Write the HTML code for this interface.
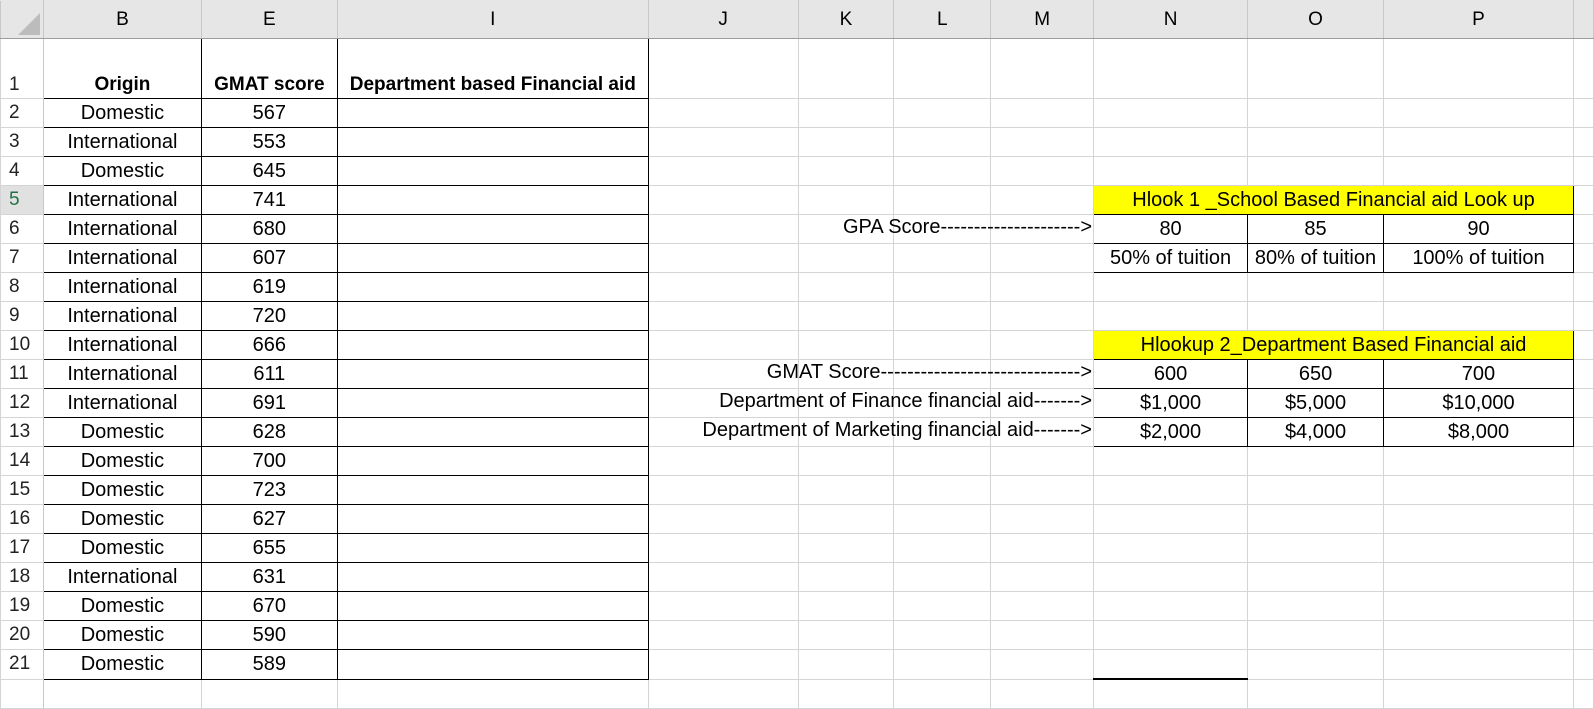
<!DOCTYPE html>
<html><head><meta charset="utf-8"><style>
body{margin:0;width:1594px;height:680px;overflow:hidden;background:#fff;font-family:"Liberation Sans",Arial,sans-serif;font-size:20px;color:#000;position:relative}
table{border-collapse:collapse;table-layout:fixed;position:absolute;left:0;top:0}
td{border:1px solid #d4d4d4;padding:0;text-align:center;white-space:nowrap;overflow:hidden;height:28px;line-height:28px}
tr.h td{background:#e6e6e6;height:37px;border-color:#e6e6e6 #c8c8c8 #9c9c9c #c8c8c8;font-size:19px;line-height:37px}
tr.r1 td{height:58px;line-height:24px;vertical-align:bottom;padding-bottom:1px}
td.rh{background:#fff;text-align:left;padding-left:8px;border-right:1px solid #c8c8c8;color:#222;font-size:19px}
td.b{border:1px solid #000}
td.bb{font-weight:bold;font-size:19px}
td.y{background:#ffff00;border:1px solid #000}
td.k{border:1px solid #000}
.lbl{position:absolute;right:calc(1594px - 1092px);white-space:nowrap;font-size:20px;line-height:28px}
</style></head><body>
<table>
<colgroup><col style="width:43px"><col style="width:158px"><col style="width:136px"><col style="width:311px"><col style="width:150px"><col style="width:96px"><col style="width:97px"><col style="width:103px"><col style="width:154px"><col style="width:136px"><col style="width:190px"><col style="width:20px"></colgroup>
<tr class="h"><td style="position:relative;padding:0"><svg width="22" height="22" style="position:absolute;right:3px;bottom:3px"><polygon points="22,0 22,22 0,22" fill="#bcbcbc"/></svg></td><td>B</td><td>E</td><td>I</td><td>J</td><td>K</td><td>L</td><td>M</td><td>N</td><td>O</td><td>P</td><td></td></tr>
<tr class="r1"><td class="rh">1</td><td class="b bb">Origin</td><td class="b bb">GMAT score</td><td class="b bb">Department based Financial aid</td><td></td><td></td><td></td><td></td><td></td><td></td><td></td><td></td></tr>
<tr><td class="rh">2</td><td class="b">Domestic</td><td class="b">567</td><td class="b"></td><td></td><td></td><td></td><td></td><td></td><td></td><td></td><td></td></tr>
<tr><td class="rh">3</td><td class="b">International</td><td class="b">553</td><td class="b"></td><td></td><td></td><td></td><td></td><td></td><td></td><td></td><td></td></tr>
<tr><td class="rh">4</td><td class="b">Domestic</td><td class="b">645</td><td class="b"></td><td></td><td></td><td></td><td></td><td></td><td></td><td></td><td></td></tr>
<tr><td class="rh" style="color:#217346;background:#e1e1e1">5</td><td class="b">International</td><td class="b">741</td><td class="b"></td><td></td><td></td><td></td><td></td><td class="y" colspan="3">Hlook 1 _School Based Financial aid Look up</td><td></td></tr>
<tr><td class="rh">6</td><td class="b">International</td><td class="b">680</td><td class="b"></td><td></td><td></td><td></td><td></td><td class="k">80</td><td class="k">85</td><td class="k">90</td><td></td></tr>
<tr><td class="rh">7</td><td class="b">International</td><td class="b">607</td><td class="b"></td><td></td><td></td><td></td><td></td><td class="k">50% of tuition</td><td class="k">80% of tuition</td><td class="k">100% of tuition</td><td></td></tr>
<tr><td class="rh">8</td><td class="b">International</td><td class="b">619</td><td class="b"></td><td></td><td></td><td></td><td></td><td></td><td></td><td></td><td></td></tr>
<tr><td class="rh">9</td><td class="b">International</td><td class="b">720</td><td class="b"></td><td></td><td></td><td></td><td></td><td></td><td></td><td></td><td></td></tr>
<tr><td class="rh">10</td><td class="b">International</td><td class="b">666</td><td class="b"></td><td></td><td></td><td></td><td></td><td class="y" colspan="3">Hlookup 2_Department Based Financial aid</td><td></td></tr>
<tr><td class="rh">11</td><td class="b">International</td><td class="b">611</td><td class="b"></td><td></td><td></td><td></td><td></td><td class="k">600</td><td class="k">650</td><td class="k">700</td><td></td></tr>
<tr><td class="rh">12</td><td class="b">International</td><td class="b">691</td><td class="b"></td><td></td><td></td><td></td><td></td><td class="k">$1,000</td><td class="k">$5,000</td><td class="k">$10,000</td><td></td></tr>
<tr><td class="rh">13</td><td class="b">Domestic</td><td class="b">628</td><td class="b"></td><td></td><td></td><td></td><td></td><td class="k">$2,000</td><td class="k">$4,000</td><td class="k">$8,000</td><td></td></tr>
<tr><td class="rh">14</td><td class="b">Domestic</td><td class="b">700</td><td class="b"></td><td></td><td></td><td></td><td></td><td></td><td></td><td></td><td></td></tr>
<tr><td class="rh">15</td><td class="b">Domestic</td><td class="b">723</td><td class="b"></td><td></td><td></td><td></td><td></td><td></td><td></td><td></td><td></td></tr>
<tr><td class="rh">16</td><td class="b">Domestic</td><td class="b">627</td><td class="b"></td><td></td><td></td><td></td><td></td><td></td><td></td><td></td><td></td></tr>
<tr><td class="rh">17</td><td class="b">Domestic</td><td class="b">655</td><td class="b"></td><td></td><td></td><td></td><td></td><td></td><td></td><td></td><td></td></tr>
<tr><td class="rh">18</td><td class="b">International</td><td class="b">631</td><td class="b"></td><td></td><td></td><td></td><td></td><td></td><td></td><td></td><td></td></tr>
<tr><td class="rh">19</td><td class="b">Domestic</td><td class="b">670</td><td class="b"></td><td></td><td></td><td></td><td></td><td></td><td></td><td></td><td></td></tr>
<tr><td class="rh">20</td><td class="b">Domestic</td><td class="b">590</td><td class="b"></td><td></td><td></td><td></td><td></td><td></td><td></td><td></td><td></td></tr>
<tr><td class="rh">21</td><td class="b">Domestic</td><td class="b">589</td><td class="b"></td><td></td><td></td><td></td><td></td><td></td><td></td><td></td><td></td></tr>
<tr><td class="rh"></td><td></td><td></td><td></td><td></td><td></td><td></td><td></td><td style="border-top:2px solid #000"></td><td></td><td></td><td></td></tr>
</table>
<div class="lbl" style="top:213px">GPA Score---------------------&gt;</div>
<div class="lbl" style="top:358px">GMAT Score------------------------------&gt;</div>
<div class="lbl" style="top:387px">Department of Finance financial aid-------&gt;</div>
<div class="lbl" style="top:416px">Department of Marketing financial aid-------&gt;</div>
</body></html>
